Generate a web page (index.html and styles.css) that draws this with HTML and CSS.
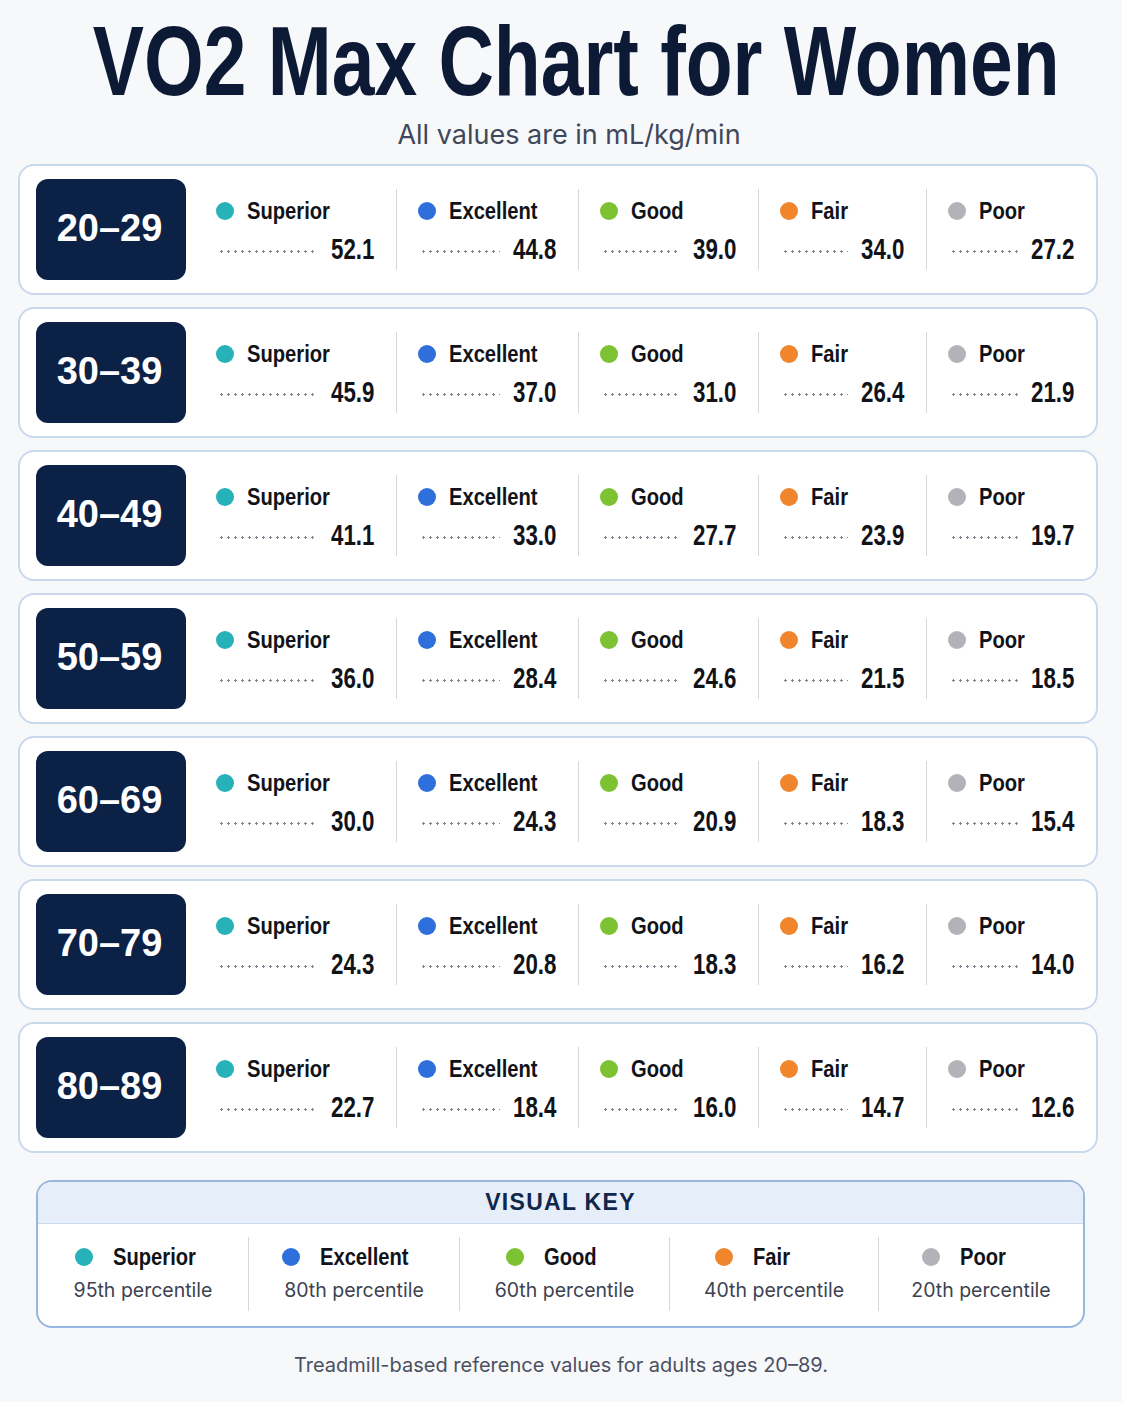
FILE: index.html
```html
<!DOCTYPE html>
<html lang="en">
<head>
<meta charset="utf-8">
<title>VO2 Max Chart for Women</title>
<link rel="stylesheet" href="styles.css">
</head>
<body>
<main class="page">
  <h1 class="title"><span class="title-text">VO2 Max Chart for Women</span></h1>
  <p class="subtitle">All values are in mL/kg/min</p>

  <section class="rows">
    <article class="row">
      <div class="age">20–29</div>
      <div class="stat"><div class="label"><span class="dot superior"></span><span class="name">Superior</span></div><div class="value"><span class="leader"></span><span class="num">52.1</span></div></div>
      <div class="stat"><div class="label"><span class="dot excellent"></span><span class="name">Excellent</span></div><div class="value"><span class="leader"></span><span class="num">44.8</span></div></div>
      <div class="stat"><div class="label"><span class="dot good"></span><span class="name">Good</span></div><div class="value"><span class="leader"></span><span class="num">39.0</span></div></div>
      <div class="stat"><div class="label"><span class="dot fair"></span><span class="name">Fair</span></div><div class="value"><span class="leader"></span><span class="num">34.0</span></div></div>
      <div class="stat"><div class="label"><span class="dot poor"></span><span class="name">Poor</span></div><div class="value"><span class="leader"></span><span class="num">27.2</span></div></div>
    </article>
    <article class="row">
      <div class="age">30–39</div>
      <div class="stat"><div class="label"><span class="dot superior"></span><span class="name">Superior</span></div><div class="value"><span class="leader"></span><span class="num">45.9</span></div></div>
      <div class="stat"><div class="label"><span class="dot excellent"></span><span class="name">Excellent</span></div><div class="value"><span class="leader"></span><span class="num">37.0</span></div></div>
      <div class="stat"><div class="label"><span class="dot good"></span><span class="name">Good</span></div><div class="value"><span class="leader"></span><span class="num">31.0</span></div></div>
      <div class="stat"><div class="label"><span class="dot fair"></span><span class="name">Fair</span></div><div class="value"><span class="leader"></span><span class="num">26.4</span></div></div>
      <div class="stat"><div class="label"><span class="dot poor"></span><span class="name">Poor</span></div><div class="value"><span class="leader"></span><span class="num">21.9</span></div></div>
    </article>
    <article class="row">
      <div class="age">40–49</div>
      <div class="stat"><div class="label"><span class="dot superior"></span><span class="name">Superior</span></div><div class="value"><span class="leader"></span><span class="num">41.1</span></div></div>
      <div class="stat"><div class="label"><span class="dot excellent"></span><span class="name">Excellent</span></div><div class="value"><span class="leader"></span><span class="num">33.0</span></div></div>
      <div class="stat"><div class="label"><span class="dot good"></span><span class="name">Good</span></div><div class="value"><span class="leader"></span><span class="num">27.7</span></div></div>
      <div class="stat"><div class="label"><span class="dot fair"></span><span class="name">Fair</span></div><div class="value"><span class="leader"></span><span class="num">23.9</span></div></div>
      <div class="stat"><div class="label"><span class="dot poor"></span><span class="name">Poor</span></div><div class="value"><span class="leader"></span><span class="num">19.7</span></div></div>
    </article>
    <article class="row">
      <div class="age">50–59</div>
      <div class="stat"><div class="label"><span class="dot superior"></span><span class="name">Superior</span></div><div class="value"><span class="leader"></span><span class="num">36.0</span></div></div>
      <div class="stat"><div class="label"><span class="dot excellent"></span><span class="name">Excellent</span></div><div class="value"><span class="leader"></span><span class="num">28.4</span></div></div>
      <div class="stat"><div class="label"><span class="dot good"></span><span class="name">Good</span></div><div class="value"><span class="leader"></span><span class="num">24.6</span></div></div>
      <div class="stat"><div class="label"><span class="dot fair"></span><span class="name">Fair</span></div><div class="value"><span class="leader"></span><span class="num">21.5</span></div></div>
      <div class="stat"><div class="label"><span class="dot poor"></span><span class="name">Poor</span></div><div class="value"><span class="leader"></span><span class="num">18.5</span></div></div>
    </article>
    <article class="row">
      <div class="age">60–69</div>
      <div class="stat"><div class="label"><span class="dot superior"></span><span class="name">Superior</span></div><div class="value"><span class="leader"></span><span class="num">30.0</span></div></div>
      <div class="stat"><div class="label"><span class="dot excellent"></span><span class="name">Excellent</span></div><div class="value"><span class="leader"></span><span class="num">24.3</span></div></div>
      <div class="stat"><div class="label"><span class="dot good"></span><span class="name">Good</span></div><div class="value"><span class="leader"></span><span class="num">20.9</span></div></div>
      <div class="stat"><div class="label"><span class="dot fair"></span><span class="name">Fair</span></div><div class="value"><span class="leader"></span><span class="num">18.3</span></div></div>
      <div class="stat"><div class="label"><span class="dot poor"></span><span class="name">Poor</span></div><div class="value"><span class="leader"></span><span class="num">15.4</span></div></div>
    </article>
    <article class="row">
      <div class="age">70–79</div>
      <div class="stat"><div class="label"><span class="dot superior"></span><span class="name">Superior</span></div><div class="value"><span class="leader"></span><span class="num">24.3</span></div></div>
      <div class="stat"><div class="label"><span class="dot excellent"></span><span class="name">Excellent</span></div><div class="value"><span class="leader"></span><span class="num">20.8</span></div></div>
      <div class="stat"><div class="label"><span class="dot good"></span><span class="name">Good</span></div><div class="value"><span class="leader"></span><span class="num">18.3</span></div></div>
      <div class="stat"><div class="label"><span class="dot fair"></span><span class="name">Fair</span></div><div class="value"><span class="leader"></span><span class="num">16.2</span></div></div>
      <div class="stat"><div class="label"><span class="dot poor"></span><span class="name">Poor</span></div><div class="value"><span class="leader"></span><span class="num">14.0</span></div></div>
    </article>
    <article class="row">
      <div class="age">80–89</div>
      <div class="stat"><div class="label"><span class="dot superior"></span><span class="name">Superior</span></div><div class="value"><span class="leader"></span><span class="num">22.7</span></div></div>
      <div class="stat"><div class="label"><span class="dot excellent"></span><span class="name">Excellent</span></div><div class="value"><span class="leader"></span><span class="num">18.4</span></div></div>
      <div class="stat"><div class="label"><span class="dot good"></span><span class="name">Good</span></div><div class="value"><span class="leader"></span><span class="num">16.0</span></div></div>
      <div class="stat"><div class="label"><span class="dot fair"></span><span class="name">Fair</span></div><div class="value"><span class="leader"></span><span class="num">14.7</span></div></div>
      <div class="stat"><div class="label"><span class="dot poor"></span><span class="name">Poor</span></div><div class="value"><span class="leader"></span><span class="num">12.6</span></div></div>
    </article>
  </section>

  <section class="key">
    <h2 class="key-title">VISUAL KEY</h2>
    <div class="key-grid">
      <div class="key-item"><div class="key-label"><span class="dot superior"></span><span class="name">Superior</span></div><div class="key-sub">95th percentile</div></div>
      <div class="key-item"><div class="key-label"><span class="dot excellent"></span><span class="name">Excellent</span></div><div class="key-sub">80th percentile</div></div>
      <div class="key-item"><div class="key-label"><span class="dot good"></span><span class="name">Good</span></div><div class="key-sub">60th percentile</div></div>
      <div class="key-item"><div class="key-label"><span class="dot fair"></span><span class="name">Fair</span></div><div class="key-sub">40th percentile</div></div>
      <div class="key-item"><div class="key-label"><span class="dot poor"></span><span class="name">Poor</span></div><div class="key-sub">20th percentile</div></div>
    </div>
  </section>

  <p class="footnote">Treadmill-based reference values for adults ages 20–89.</p>
</main>
</body>
</html>
```

FILE: styles.css
```css
* { box-sizing: border-box; }

html, body {
  margin: 0;
  padding: 0;
  background: #f7f8fa;
}

body {
  font-family: "Liberation Sans", Arial, sans-serif;
  color: #111;
}

.page {
  width: 1122px;
  padding-top: 12px;
}

.title {
  margin: 0;
  padding-left: 30px;
  height: 98px;
  display: flex;
  align-items: center;
  justify-content: center;
  font-family: "Liberation Sans", Arial, sans-serif;
  font-weight: 700;
  font-size: 78px;
  line-height: 78px;
  color: #0d1a36;
}

.title-text {
  flex: none;
  display: inline-block;
  white-space: nowrap;
  transform: scale(0.984, 1.256);
  transform-origin: center center;
}

.subtitle {
  margin: 10px 0 0;
  padding-left: 16px;
  text-align: center;
  font-family: Inter, "Liberation Sans", sans-serif;
  font-size: 27px;
  line-height: 30px;
  color: #41475a;
}

.rows {
  margin: 14px 0 0 18px;
  width: 1080px;
  display: flex;
  flex-direction: column;
  gap: 12px;
}

.row {
  height: 131px;
  background: #fff;
  border: 2px solid #c9d8ed;
  border-radius: 16px;
  padding: 0 0 0 16px;
  display: grid;
  grid-template-columns: 180px 180px 182px 180px 168px 1fr;
  align-items: center;
}

.age {
  width: 150px;
  height: 101px;
  border-radius: 12px;
  background: #0c2146;
  color: #fff;
  display: flex;
  align-items: center;
  justify-content: center;
  font-family: "Liberation Sans", Arial, sans-serif;
  font-weight: 700;
  font-size: 38px;
  padding: 0 3px 2px 0;
}

.stat {
  height: 81px;
  padding: 8px 22px 0 21px;
  border-left: 1px solid #d4d7dc;
  display: flex;
  flex-direction: column;
  gap: 8px;
}

.age + .stat {
  border-left: 0;
  padding-left: 0;
}

.label {
  display: flex;
  align-items: center;
  gap: 13px;
  height: 28px;
  font-family: "Liberation Sans", Arial, sans-serif;
  font-weight: 700;
  font-size: 24px;
  line-height: 28px;
  color: #111318;
}

.name {
  display: inline-block;
  white-space: nowrap;
  transform: scaleX(0.84);
  transform-origin: left center;
}

.dot {
  flex: none;
  width: 18px;
  height: 18px;
  border-radius: 50%;
}

.dot.superior { background: #27b1b9; }
.dot.excellent { background: #2f6fdb; }
.dot.good { background: #7cc233; }
.dot.fair { background: #f0852b; }
.dot.poor { background: #b1b3b8; }

.value {
  display: flex;
  align-items: center;
  height: 32px;
}

.leader {
  flex: 1;
  height: 3px;
  margin: 4px 0 0 2px;
  background-image: radial-gradient(circle, #7f848e 0 1px, transparent 1.4px);
  background-size: 7px 3px;
  background-repeat: repeat-x;
}

.num {
  display: inline-block;
  font-family: "Liberation Sans", Arial, sans-serif;
  font-weight: 700;
  font-size: 29px;
  line-height: 32px;
  color: #111318;
  transform: scaleX(0.77);
  transform-origin: right center;
  white-space: nowrap;
}

.key {
  margin: 27px 0 0 36px;
  width: 1049px;
  background: #fff;
  border: 2px solid #98b7e0;
  border-radius: 16px;
  overflow: hidden;
}

.key-title {
  margin: 0;
  height: 42px;
  background: #e6eef9;
  border-bottom: 1px solid #c9d9ee;
  text-align: center;
  font-family: "Liberation Sans", Arial, sans-serif;
  font-weight: 700;
  font-size: 23px;
  line-height: 41px;
  letter-spacing: 1.3px;
  color: #10264a;
}

.key-grid {
  display: grid;
  grid-template-columns: 210px 211px 210px 209px 1fr;
  padding: 13px 0 15px;
}

.key-item {
  height: 74px;
  display: flex;
  flex-direction: column;
  align-items: center;
  gap: 6px;
  padding-top: 6px;
  border-left: 1px solid #d4d7dc;
}

.key-item:first-child { border-left: 0; }

.key-label {
  min-width: 118px;
  display: flex;
  align-items: center;
  gap: 20px;
  height: 28px;
  font-family: "Liberation Sans", Arial, sans-serif;
  font-weight: 700;
  font-size: 24px;
  line-height: 28px;
  color: #111318;
}

.key-sub {
  font-family: Inter, "Liberation Sans", sans-serif;
  font-size: 19.5px;
  line-height: 26px;
  color: #3d4250;
}

.footnote {
  margin: 24px 0 0;
  text-align: center;
  font-family: Inter, "Liberation Sans", sans-serif;
  font-size: 20px;
  line-height: 26px;
  color: #4a5062;
}
```
